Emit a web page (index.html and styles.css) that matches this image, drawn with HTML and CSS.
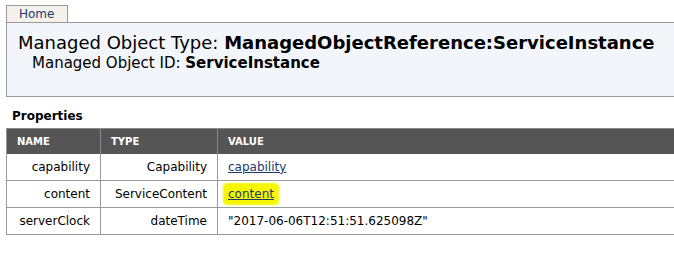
FILE: index.html
```html
<!DOCTYPE html>
<html lang="en">
<head>
    <meta charset="UTF-8">
    <title>Managed Object Browser</title>
    <link rel="stylesheet" href="styles.css">
</head>
<body>
    <nav class="tabs">
        <a class="tab" href="#">Home</a>
    </nav>

    <header class="object-header">
        <h1>Managed Object Type: <strong>ManagedObjectReference:ServiceInstance</strong></h1>
        <h2>Managed Object ID: <strong>ServiceInstance</strong></h2>
    </header>

    <section class="props">
        <h3>Properties</h3>
        <table>
            <thead>
                <tr>
                    <th class="col-name">Name</th>
                    <th class="col-type">Type</th>
                    <th>Value</th>
                </tr>
            </thead>
            <tbody>
                <tr>
                    <td class="cell-right">capability</td>
                    <td class="cell-right">Capability</td>
                    <td><a href="#">capability</a></td>
                </tr>
                <tr>
                    <td class="cell-right">content</td>
                    <td class="cell-right">ServiceContent</td>
                    <td><a class="marked" href="#">content</a></td>
                </tr>
                <tr>
                    <td class="cell-right">serverClock</td>
                    <td class="cell-right">dateTime</td>
                    <td>"2017-06-06T12:51:51.625098Z"</td>
                </tr>
            </tbody>
        </table>
    </section>
</body>
</html>
```

FILE: styles.css
```css
html, body {
    overflow: hidden;
}
body {
    margin: 0 0 0 6px;
    padding-top: 5px;
    font-family: "DejaVu Sans", Verdana, sans-serif;
    font-size: 12px;
    color: #000000;
    background-color: #ffffff;
}
a {
    color: #1c3a6b;
}
.tabs {
    display: flex;
}
.tab {
    display: block;
    box-sizing: border-box;
    width: 62px;
    height: 17px;
    line-height: 16px;
    padding-left: 12px;
    border: 1px solid #999999;
    border-bottom: none;
    background-color: #f4f1ea;
    color: #1c3a6b;
    text-decoration: none;
    font-size: 12px;
}
.object-header {
    box-sizing: border-box;
    height: 75px;
    padding: 9px 11px;
    background-color: #f2f5fa;
    border: 1px solid #999999;
    border-right: none;
}
.object-header h1 {
    margin: 0;
    font-size: 18px;
    font-weight: normal;
    line-height: 22px;
}
.object-header h2 {
    margin: 0 0 0 14px;
    font-size: 15px;
    font-weight: normal;
    line-height: 18px;
}
.props h3 {
    margin: 12px 0 5px 6px;
    font-size: 12px;
    line-height: 14px;
}
table {
    width: 100%;
    border-collapse: collapse;
    border-left: 1px solid #999999;
}
th {
    box-sizing: border-box;
    height: 25px;
    padding: 0 10px;
    background-color: #555555;
    color: #ffffff;
    text-align: left;
    text-transform: uppercase;
    font-size: 10px;
    border-left: 1px solid #8a8a8a;
    border-top: 1px solid #8a8a8a;
}
th:first-child {
    border-left: none;
}
.col-name {
    width: 94px;
}
.col-type {
    width: 117px;
}
td {
    box-sizing: border-box;
    height: 27px;
    padding: 0 10px;
    border-left: 1px solid #999999;
    border-bottom: 1px solid #999999;
}
td:first-child {
    border-left: none;
}
.cell-right {
    text-align: right;
}
.marked {
    background-color: #f6f600;
    border-radius: 3px;
    padding: 3px 4px;
    margin-left: -4px;
    box-shadow: 0 0 2px 1px #f6f600;
}
```
